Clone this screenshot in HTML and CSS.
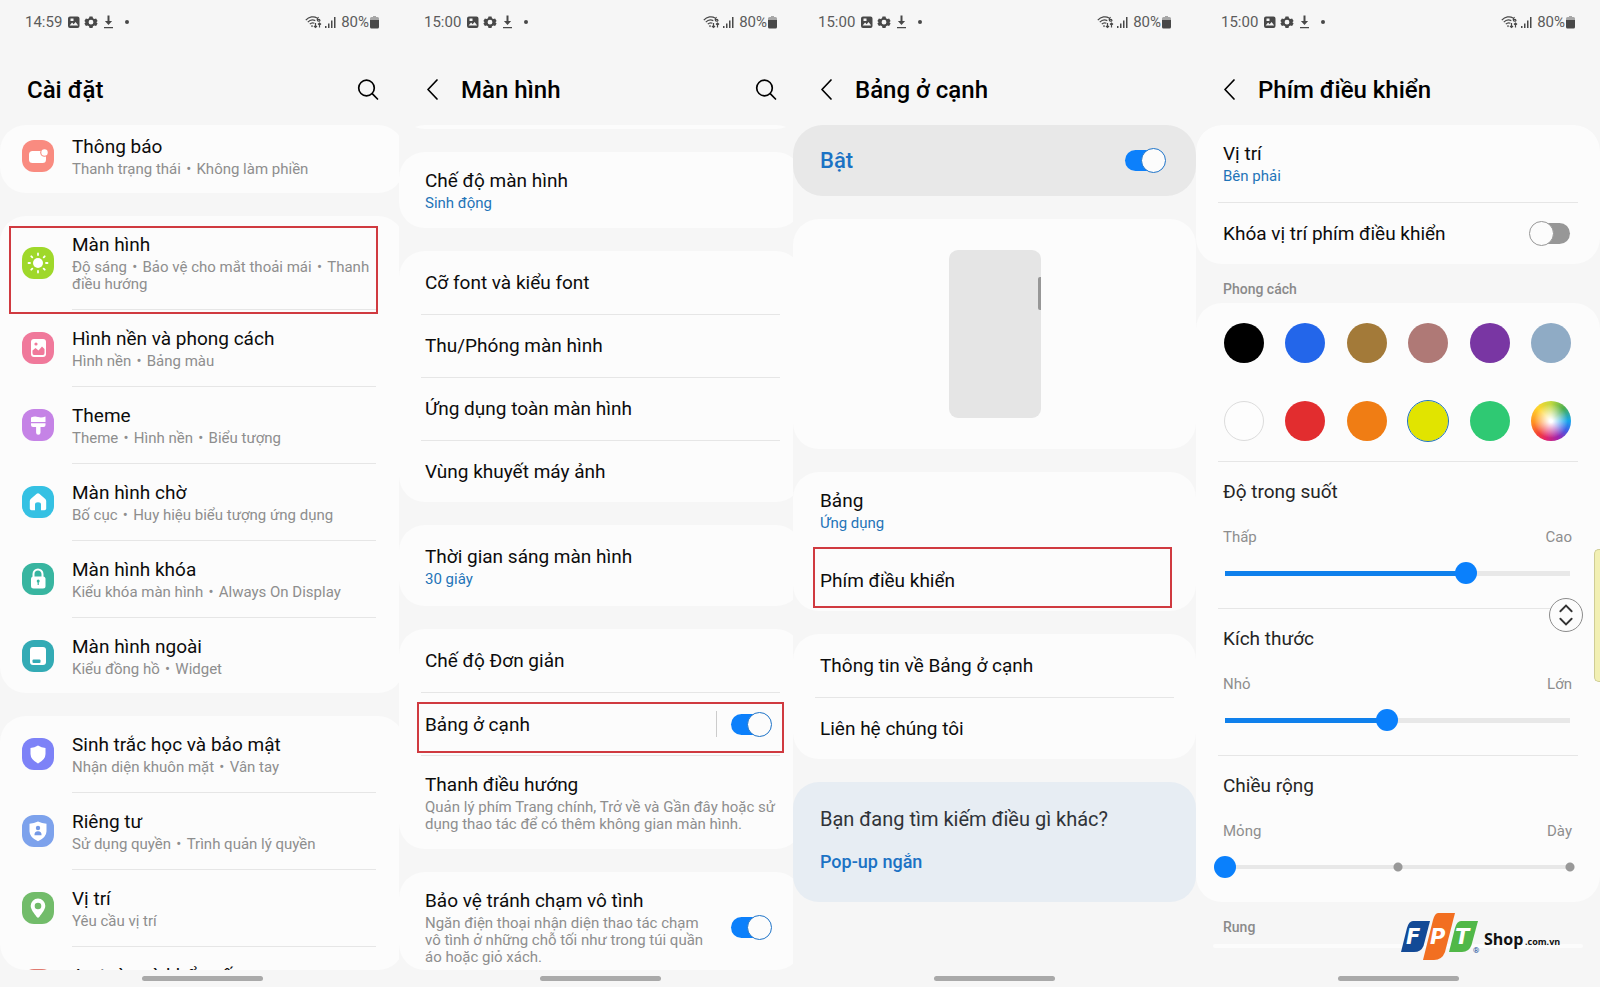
FILE: index.html
```html
<!DOCTYPE html>
<html lang="vi">
<head>
    <meta charset="UTF-8">
    <meta name="viewport" content="width=device-width, initial-scale=1.0">
    <title>Cài đặt Bảng ở cạnh</title>
    <link rel="stylesheet" href="styles.css">
</head>
<body>
    <!-- Shared icons -->
    <svg class="sprite" aria-hidden="true">
        <symbol id="i-left" viewBox="0 0 50 16">
            <path fill-rule="evenodd" d="M2 2.500h7.500a2 2 0 0 1 2 2v7.500a2 2 0 0 1-2 2H2a2 2 0 0 1-2-2V4.500a2 2 0 0 1 2-2zm-.4 9h8.600L7.600 8l-2 2.200-1.500-1.700zM2.500 4.500V7h3V4.500z"/>
            <path fill-rule="evenodd" d="M21.500 2.500h3l.5 1.700 1.300.8 1.800-.5 1.500 2.400L28.400 8.200l1.200 1.300-1.500 2.400-1.800-.5-1.300.8-.5 1.700h-3l-.5-1.700-1.300-.8-1.800.5-1.500-2.400 1.200-1.300-1.200-1.300 1.500-2.400 1.800.5 1.300-.8zM23 5.800a2.400 2.400 0 1 0 0 4.800 2.400 2.400 0 0 0 0-4.800z"/>
            <path d="M39.500 1.500h2v5.500h2.600L40.500 11 36.900 7h2.600zM36 13h9v1.300h-9z"/>
        </symbol>
        <symbol id="i-right" viewBox="0 0 32 16">
            <g fill="none" stroke="currentColor" stroke-width="1.200">
                <path d="M.8 6.200C4 2.500 9 2 12 4M2.800 8.200c2-2.300 5-2.800 7.500-1.600M4.800 10.200c1.300-1.400 3-1.700 4.600-1"/>
                <path d="M13.700 3.200c-2 .6-2 4 0 4s1.600-2.400-1.200-1.600"/>
                <path d="M10.500 9v4.500M9 12l1.500 1.500L12 12M14.500 13.500V9M13 10.500L14.500 9l1.500 1.500"/>
            </g>
            <path d="M6 12l1-1 1 1-1 1.200zM20 12h1.500v2H20zM23 9.500h1.500V14H23zM26 6.500h1.500V14H26zM29 3h1.500v11H29z"/>
        </symbol>
        <symbol id="i-battery" viewBox="0 0 9 13">
            <path opacity=".45" d="M3 0h3v1h1.500Q9 1 9 2.500V5H0V2.500Q0 1 1.500 1H3z"/>
            <path d="M0 4h9v7a1.500 1.500 0 0 1-1.500 1.500h-6A1.500 1.500 0 0 1 0 11z"/>
        </symbol>
        <symbol id="i-search" viewBox="0 0 22 22">
            <g fill="none" stroke="currentColor" stroke-width="1.700" stroke-linecap="round"><circle cx="9.500" cy="9" r="7.800"/><path d="M15.200 14.700L20.500 20"/></g>
        </symbol>
        <symbol id="i-back" viewBox="0 0 12 22">
            <path fill="none" stroke="currentColor" stroke-width="1.700" stroke-linecap="round" stroke-linejoin="round" d="M11 1L2 10.500 11 20"/>
        </symbol>
    </svg>

    <main class="screens">
        <!-- Settings list -->
        <section class="screen screen-settings">
            <div class="status">
                <span>14:59</span><svg class="status-left"><use href="#i-left"/></svg><i class="status-dot"></i>
                <svg class="status-right"><use href="#i-right"/></svg><span class="percent">80%</span><svg class="battery"><use href="#i-battery"/></svg>
            </div>
            <header class="header">
                <h1>Cài đặt</h1>
                <button class="icon-btn search" aria-label="Tìm kiếm"><svg><use href="#i-search"/></svg></button>
            </header>
            <div class="scroll">
                <div class="card cut-first">
                    <a class="row" href="#">
                        <span class="app-icon coral"><svg viewBox="0 0 32 32"><rect x="7" y="11" width="17" height="12" rx="3.500" fill="#fff"/><circle cx="22.500" cy="12.500" r="4.300" fill="#f98b80"/><circle cx="22.500" cy="12.500" r="3.200" fill="#fff"/></svg></span>
                        <span class="text"><span class="title">Thông báo</span><span class="sub">Thanh trạng thái&hairsp; • &hairsp;Không làm phiền</span></span>
                    </a>
                </div>
                <div class="card">
                    <a class="row" href="#">
                        <span class="app-icon lime"><svg viewBox="0 0 32 32"><circle cx="16" cy="16" r="5" fill="#fff"/><path stroke="#fff" stroke-width="1.800" stroke-linecap="round" d="M16 6.500v1.500M16 24v1.500M6.500 16H8M24 16h1.500M9.300 9.300l1 1M21.700 21.700l1 1M9.300 22.700l1-1M21.700 10.300l1-1"/></svg></span>
                        <span class="text"><span class="title">Màn hình</span><span class="sub">Độ sáng&hairsp; • &hairsp;Bảo vệ cho mắt thoải mái&hairsp; • &hairsp;Thanh điều hướng</span></span>
                        <span class="mark mark-display"></span>
                    </a>
                    <a class="row" href="#">
                        <span class="app-icon pink"><svg viewBox="0 0 32 32"><rect x="9" y="7" width="15" height="18" rx="3" fill="#fff"/><circle cx="14" cy="12" r="1.600" fill="#f0799b"/><path fill="#f0799b" d="M10.500 21v-2.500l3-2.500 3 2.500 3.500-4 2.500 2.500v4q0 2-1.500 2H12q-1.500 0-1.500-2z"/></svg></span>
                        <span class="text"><span class="title">Hình nền và phong cách</span><span class="sub">Hình nền&hairsp; • &hairsp;Bảng màu</span></span>
                    </a>
                    <a class="row" href="#">
                        <span class="app-icon violet"><svg viewBox="0 0 32 32"><path fill="#fff" d="M9 8.500q3.500-1.500 7-.5t7.500-.5V13H9zM9 14.200h14.500V16q0 2-2 2H18.500v5.500a2.200 2.200 0 0 1-4.400 0V18H11q-2 0-2-2z"/></svg></span>
                        <span class="text"><span class="title">Theme</span><span class="sub">Theme&hairsp; • &hairsp;Hình nền&hairsp; • &hairsp;Biểu tượng</span></span>
                    </a>
                    <a class="row" href="#">
                        <span class="app-icon sky"><svg viewBox="0 0 32 32"><path fill="#fff" d="M14.700 7.800q1.300-1.100 2.600 0l6 5.200q.9.800.9 2v7.500q0 1.800-1.800 1.800H19V18.500q0-2.200-3-2.200t-3 2.200v5.800H9.600q-1.800 0-1.800-1.800V15q0-1.200.9-2z"/></svg></span>
                        <span class="text"><span class="title">Màn hình chờ</span><span class="sub">Bố cục&hairsp; • &hairsp;Huy hiệu biểu tượng ứng dụng</span></span>
                    </a>
                    <a class="row" href="#">
                        <span class="app-icon teal"><svg viewBox="0 0 32 32"><path fill="none" stroke="#fff" stroke-width="2" d="M11.500 15v-4a4.500 4.500 0 0 1 9 0v4"/><rect x="9" y="13.500" width="14.500" height="12" rx="2.500" fill="#fff"/><circle cx="16.200" cy="18" r="1.500" fill="#38b5a0"/><path stroke="#38b5a0" stroke-width="1.200" d="M16.200 18v4"/></svg></span>
                        <span class="text"><span class="title">Màn hình khóa</span><span class="sub">Kiểu khóa màn hình&hairsp; • &hairsp;Always On Display</span></span>
                    </a>
                    <a class="row" href="#">
                        <span class="app-icon aqua"><svg viewBox="0 0 32 32"><rect x="8" y="7" width="16" height="18" rx="3" fill="#fff"/><rect x="10.500" y="19.500" width="8" height="3.500" rx="1" fill="#33abb5"/></svg></span>
                        <span class="text"><span class="title">Màn hình ngoài</span><span class="sub">Kiểu đồng hồ&hairsp; • &hairsp;Widget</span></span>
                    </a>
                </div>
                <div class="card">
                    <a class="row" href="#">
                        <span class="app-icon indigo"><svg viewBox="0 0 32 32"><path fill="#fff" d="M16 7.500q3.500 2 7.500 2.500v6q0 5.500-7.500 9.500-7.500-4-7.500-9.500v-6q4-.5 7.500-2.500z"/></svg></span>
                        <span class="text"><span class="title">Sinh trắc học và bảo mật</span><span class="sub">Nhận diện khuôn mặt&hairsp; • &hairsp;Vân tay</span></span>
                    </a>
                    <a class="row" href="#">
                        <span class="app-icon blue"><svg viewBox="0 0 32 32"><path fill="#fff" d="M16 6.500q4 2 8.500 2.300v7.500q0 6-8.500 10-8.500-4-8.500-10V8.800Q12 8.500 16 6.500z"/><circle cx="16" cy="13" r="2.200" fill="#7499e6"/><path fill="#7499e6" d="M12.500 20.300q-.3-4 3.500-4t3.500 4z"/></svg></span>
                        <span class="text"><span class="title">Riêng tư</span><span class="sub">Sử dụng quyền&hairsp; • &hairsp;Trình quản lý quyền</span></span>
                    </a>
                    <a class="row" href="#">
                        <span class="app-icon green"><svg viewBox="0 0 32 32"><path fill="#fff" fill-rule="evenodd" d="M16 6.500a7.300 7.300 0 0 1 7.300 7.300c0 3.700-3.500 7.700-6 11.200q-1.300 1.500-2.600 0c-2.500-3.500-6-7.500-6-11.200A7.300 7.300 0 0 1 16 6.500zm0 4.200a3.300 3.300 0 1 0 0 6.600 3.300 3.300 0 0 0 0-6.600z"/></svg></span>
                        <span class="text"><span class="title">Vị trí</span><span class="sub">Yêu cầu vị trí</span></span>
                    </a>
                    <a class="row" href="#">
                        <span class="app-icon red"></span>
                        <span class="text"><span class="title">An toàn và khẩn cấp</span></span>
                    </a>
                </div>
            </div>
            <div class="home"></div>
        </section>

        <!-- Display -->
        <section class="screen screen-display">
            <div class="status">
                <span>15:00</span><svg class="status-left"><use href="#i-left"/></svg><i class="status-dot"></i>
                <svg class="status-right"><use href="#i-right"/></svg><span class="percent">80%</span><svg class="battery"><use href="#i-battery"/></svg>
            </div>
            <header class="header">
                <button class="icon-btn back" aria-label="Quay lại"><svg><use href="#i-back"/></svg></button>
                <h1>Màn hình</h1>
                <button class="icon-btn search" aria-label="Tìm kiếm"><svg><use href="#i-search"/></svg></button>
            </header>
            <div class="scroll">
                <div class="card sliver"></div>
                <div class="card">
                    <a class="row" href="#"><span class="text"><span class="title">Chế độ màn hình</span><span class="sub value">Sinh động</span></span></a>
                </div>
                <div class="card">
                    <a class="row single" href="#"><span class="title">Cỡ font và kiểu font</span></a>
                    <a class="row single" href="#"><span class="title">Thu/Phóng màn hình</span></a>
                    <a class="row single" href="#"><span class="title">Ứng dụng toàn màn hình</span></a>
                    <a class="row single" href="#"><span class="title">Vùng khuyết máy ảnh</span></a>
                </div>
                <div class="card">
                    <a class="row tall" href="#"><span class="text"><span class="title">Thời gian sáng màn hình</span><span class="sub value">30 giây</span></span></a>
                </div>
                <div class="card">
                    <a class="row single" href="#"><span class="title">Chế độ Đơn giản</span></a>
                    <div class="row single">
                        <label class="title" for="edge">Bảng ở cạnh</label>
                        <i class="divider"></i>
                        <input class="toggle" type="checkbox" id="edge" checked>
                        <span class="mark mark-edge"></span>
                    </div>
                    <a class="row" href="#"><span class="text"><span class="title">Thanh điều hướng</span><span class="sub">Quản lý phím Trang chính, Trở về và Gần đây hoặc sử dụng thao tác để có thêm không gian màn hình.</span></span></a>
                </div>
                <div class="card">
                    <div class="row">
                        <label class="text" for="touch"><span class="title">Bảo vệ tránh chạm vô tình</span><span class="sub">Ngăn điện thoại nhận diện thao tác chạm vô tình ở những chỗ tối như trong túi quần áo hoặc giỏ xách.</span></label>
                        <input class="toggle" type="checkbox" id="touch" checked>
                    </div>
                </div>
            </div>
            <div class="home"></div>
        </section>

        <!-- Edge panels -->
        <section class="screen screen-edge">
            <div class="status">
                <span>15:00</span><svg class="status-left"><use href="#i-left"/></svg><i class="status-dot"></i>
                <svg class="status-right"><use href="#i-right"/></svg><span class="percent">80%</span><svg class="battery"><use href="#i-battery"/></svg>
            </div>
            <header class="header">
                <button class="icon-btn back" aria-label="Quay lại"><svg><use href="#i-back"/></svg></button>
                <h1>Bảng ở cạnh</h1>
            </header>
            <div class="scroll">
                <div class="card master">
                    <label for="master">Bật</label>
                    <input class="toggle" type="checkbox" id="master" checked>
                </div>
                <div class="card preview"><div class="phone"><i></i></div></div>
                <div class="card">
                    <a class="row" href="#"><span class="text"><span class="title">Bảng</span><span class="sub value">Ứng dụng</span></span></a>
                    <a class="row single" href="#"><span class="title">Phím điều khiển</span><span class="mark mark-handle"></span></a>
                </div>
                <div class="card">
                    <a class="row single" href="#"><span class="title">Thông tin về Bảng ở cạnh</span></a>
                    <a class="row single" href="#"><span class="title">Liên hệ chúng tôi</span></a>
                </div>
                <div class="card tip">
                    <p>Bạn đang tìm kiếm điều gì khác?</p>
                    <a href="#">Pop-up ngắn</a>
                </div>
            </div>
            <div class="home"></div>
        </section>

        <!-- Handle -->
        <section class="screen screen-handle">
            <div class="status">
                <span>15:00</span><svg class="status-left"><use href="#i-left"/></svg><i class="status-dot"></i>
                <svg class="status-right"><use href="#i-right"/></svg><span class="percent">80%</span><svg class="battery"><use href="#i-battery"/></svg>
            </div>
            <header class="header">
                <button class="icon-btn back" aria-label="Quay lại"><svg><use href="#i-back"/></svg></button>
                <h1>Phím điều khiển</h1>
            </header>
            <div class="scroll">
                <div class="card">
                    <a class="row" href="#"><span class="text"><span class="title">Vị trí</span><span class="sub value">Bên phải</span></span></a>
                    <div class="row single">
                        <label class="title" for="lock">Khóa vị trí phím điều khiển</label>
                        <input class="toggle" type="checkbox" id="lock">
                    </div>
                </div>
                <h2 class="section-label">Phong cách</h2>
                <div class="card">
                    <div class="swatches">
                        <input type="radio" name="color" class="c-black" aria-label="Đen">
                        <input type="radio" name="color" class="c-blue" aria-label="Xanh dương">
                        <input type="radio" name="color" class="c-brown" aria-label="Nâu">
                        <input type="radio" name="color" class="c-rose" aria-label="Hồng">
                        <input type="radio" name="color" class="c-purple" aria-label="Tím">
                        <input type="radio" name="color" class="c-steel" aria-label="Xanh xám">
                        <input type="radio" name="color" class="c-white" aria-label="Trắng">
                        <input type="radio" name="color" class="c-red" aria-label="Đỏ">
                        <input type="radio" name="color" class="c-orange" aria-label="Cam">
                        <input type="radio" name="color" class="c-yellow" aria-label="Vàng" checked>
                        <input type="radio" name="color" class="c-green" aria-label="Xanh lá">
                        <input type="radio" name="color" class="c-custom" aria-label="Tùy chỉnh">
                    </div>
                    <div class="slider">
                        <label for="opacity">Độ trong suốt</label>
                        <div class="ends"><span>Thấp</span><span>Cao</span></div>
                        <input type="range" id="opacity" value="70" style="--value: 70%">
                    </div>
                    <div class="slider">
                        <label for="size">Kích thước</label>
                        <div class="ends"><span>Nhỏ</span><span>Lớn</span></div>
                        <input type="range" id="size" value="47" style="--value: 47%">
                    </div>
                    <div class="slider">
                        <label for="width">Chiều rộng</label>
                        <div class="ends"><span>Mỏng</span><span>Dày</span></div>
                        <input type="range" id="width" class="steps" min="0" max="2" value="0">
                    </div>
                </div>
                <h2 class="section-label">Rung</h2>
                <div class="card sliver-top"></div>
            </div>
            <div class="home"></div>

            <button class="move-btn" aria-label="Di chuyển"><svg viewBox="0 0 34 34"><path d="M11 13l6-6 6 6M11 21l6 6 6-6"/></svg></button>
            <div class="edge-handle"></div>
            <svg class="logo" viewBox="0 0 160 48">
                <path fill="#134a96" d="M12 8H29L22.500 33Q20 39 13 39H0L6 15Q8 8 12 8z"/>
                <path fill="#f26f21" d="M37 0H54L44 39Q41 47 33 47H22L32 7Q34 0 37 0z"/>
                <path fill="#51b848" d="M60 8H77L70.500 32Q68 39 61 39H48L54 15Q56 8 60 8z"/>
                <g class="logo-letters"><text x="5" y="31">F</text><text x="29" y="31">P</text><text x="54" y="31">T</text></g>
                <text class="logo-reg" x="72" y="40">®</text>
                <text class="logo-shop" x="83" y="32">Shop</text>
                <text class="logo-domain" x="124" y="32">.com.vn</text>
            </svg>
        </section>
    </main>
</body>
</html>
```

FILE: styles.css
```css
* {
    box-sizing: border-box;
}
body {
    margin: 0;
    font-family: Roboto, "Noto Sans", sans-serif;
    color: #0c0c0c;
    background: #f6f6f6;
}
a {
    color: inherit;
    text-decoration: none;
}
input, button {
    margin: 0;
    font: inherit;
}
.sprite {
    display: none;
}

/* Screens: each one is drawn over the right edge of the one before */
.screens {
    display: grid;
    grid-template-columns: 399fr 394fr 403fr 404fr;
    height: 100vh;
    overflow: hidden;
}
.screen {
    position: relative;
    display: flex;
    flex-direction: column;
    min-width: 0;
    min-height: 0;
    background: #f6f6f6;
}
.screen-settings {
    margin-right: -5px;
}
.screen-display {
    margin-right: -9px;
}

/* Status bar */
.status {
    display: flex;
    align-items: center;
    height: 44px;
    padding: 0 25px;
    font-size: 15px;
    color: #5c5c5c;
}
.status svg {
    fill: #484848;
    color: #484848;
}
.status-left {
    width: 50px;
    height: 16px;
    margin-left: 6px;
}
.status-dot {
    width: 4px;
    height: 4px;
    margin-left: 7px;
    border-radius: 50%;
    background: #484848;
}
.status-right {
    width: 32px;
    height: 16px;
    margin-left: auto;
}
.percent {
    margin: 0 1px 0 4px;
}
.battery {
    width: 9px;
    height: 13px;
}

/* Header */
.header {
    display: flex;
    align-items: center;
    height: 81px;
    padding: 10px 25px 0 27px;
    color: #000;
}
.header h1 {
    margin: 0;
    font-size: 24px;
    font-weight: 500;
}
.icon-btn {
    display: flex;
    padding: 0;
    border: none;
    background: none;
    color: #000;
    cursor: pointer;
}
.search {
    margin-left: auto;
}
.search svg {
    width: 22px;
    height: 22px;
}
.back {
    margin-right: 23px;
}
.back svg {
    width: 12px;
    height: 22px;
}

/* Cards and rows */
.scroll {
    flex: 1;
    display: flex;
    flex-direction: column;
    gap: 23px;
    min-height: 0;
    overflow: hidden;
    border-radius: 26px;
}
.card {
    flex-shrink: 0;
    border-radius: 26px;
    background: #fcfcfc;
}
.cut-first {
    margin-top: -7px;
}
.sliver {
    height: 60px;
    margin-top: -56px;
}
.row {
    position: relative;
    display: flex;
    align-items: center;
    padding: 16px 22px 16px 27px;
}
.screen-display .row {
    padding-left: 26px;
}
.row + .row::before {
    content: "";
    position: absolute;
    top: 0;
    left: 22px;
    right: 22px;
    height: 1px;
    background: #e6e6e6;
}
.row + .row {
    padding-top: 17px;
}
.text {
    flex: 1;
    min-height: 44px;
}
.title {
    display: block;
    font-size: 19px;
    line-height: 25px;
}
.sub {
    display: block;
    margin-top: 2px;
    font-size: 15px;
    line-height: 17px;
    color: #8e8e8e;
}
.sub.value {
    color: #1f74b8;
}
.row.single,
.row.tall {
    padding-top: 19px;
    padding-bottom: 18px;
}
.row + .single {
    border-top: 1px solid transparent;
}
.row label.title {
    flex: 1;
}
.row .toggle {
    margin: 0 8px 0 24px;
}
.divider {
    width: 1px;
    height: 26px;
    background: #ccc;
}
.row .divider + .toggle {
    margin-left: 14px;
}

/* Settings list */
.screen-settings .row {
    padding-left: 22px;
}
.screen-settings .row:last-child {
    padding-bottom: 15px;
}
.screen-settings .row + .row::before {
    left: 72px;
    right: 28px;
}
.app-icon {
    width: 32px;
    height: 32px;
    margin-right: 18px;
    border-radius: 12px;
}
.app-icon svg {
    display: block;
}
.coral { background: #f98b80; }
.lime { background: #9fd82a; }
.pink { background: #f0799b; }
.violet { background: #c583e6; }
.sky { background: #35c1e3; }
.teal { background: #38b5a0; }
.aqua { background: #33abb5; }
.indigo { background: #7d82f7; }
.blue { background: #7da2ec; }
.green { background: #72bc6a; }
.red { background: #e07a70; }

/* Red frames round the row to tap */
.mark {
    position: absolute;
    border: 2px solid #d03a40;
    pointer-events: none;
}
.mark-display {
    inset: 10px 26px -5px 9px;
}
.mark-edge {
    inset: 10px 18px 2px;
}
.mark-handle {
    inset: -2px 24px 3px 20px;
}

/* Toggle */
.toggle {
    appearance: none;
    display: grid;
    align-items: center;
    flex-shrink: 0;
    width: 41px;
    height: 25px;
}
.toggle::before,
.toggle::after {
    content: "";
    grid-area: 1 / 1;
}
.toggle::before {
    height: 21px;
    margin-left: 2px;
    border-radius: 11px;
    background: #979797;
}
.toggle::after {
    box-sizing: border-box;
    width: 25px;
    height: 25px;
    border: 1px solid #979797;
    border-radius: 50%;
    background: #fcfcfc;
}
.toggle:checked::before {
    margin: 0 2px 0 0;
    background: #0c80fb;
}
.toggle:checked::after {
    justify-self: end;
    border-color: #1f74c8;
}

/* Edge panels */
.master {
    display: flex;
    align-items: center;
    justify-content: space-between;
    height: 71px;
    padding: 0 30px 0 27px;
    border-radius: 30px;
    background: #e8e8e8;
    font-size: 22px;
    font-weight: 500;
    color: #1b72c4;
}
.preview {
    display: flex;
    justify-content: center;
    padding: 31px 0;
}
.phone {
    width: 92px;
    height: 168px;
    padding-top: 27px;
    border-radius: 9px;
    background: #e5e5e5;
}
.phone i {
    display: block;
    width: 3px;
    height: 33px;
    margin-left: auto;
    border-radius: 2px 0 0 2px;
    background: #979797;
}
.screen-edge .row + .single:has(.mark)::before {
    display: none;
}
.tip {
    padding: 24px 27px 27px;
    background: #e7edf3;
}
.tip p {
    margin: 0 0 15px;
    font-size: 20px;
    line-height: 27px;
    color: #303338;
}
.tip a {
    display: block;
    font-size: 18px;
    font-weight: 500;
    line-height: 27px;
    color: #1b72c4;
}

/* Handle */
.section-label {
    flex-shrink: 0;
    margin: -23px 0;
    padding: 11px 27px 0;
    font-size: 14px;
    font-weight: 500;
    line-height: 28px;
    color: #8a8a8a;
}
.sliver-top {
    height: 4px;
    margin: 3px 17px 0;
}
.swatches {
    display: grid;
    grid-template-columns: repeat(6, 40px);
    justify-content: space-between;
    row-gap: 38px;
    padding: 20px 29px 20px 28px;
}
.swatches input {
    appearance: none;
    height: 40px;
    border-radius: 50%;
}
.swatches input:checked {
    outline: 1px solid #1f74b8;
    outline-offset: 0;
}
.c-black { background: #000; }
.c-blue { background: #2366ea; }
.c-brown { background: #a37a39; }
.c-rose { background: #af7976; }
.c-purple { background: #7936a3; }
.c-steel { background: #8fabc5; }
.c-white { background: #fdfdfd; border: 1px solid #dcdcdc; }
.c-red { background: #e22d2f; }
.c-orange { background: #f07d14; }
.c-yellow { background: #e1e400; }
.c-green { background: #2fc973; }
.c-custom {
    background:
        radial-gradient(circle, #fff 5%, rgba(255, 255, 255, 0) 60%),
        conic-gradient(#c0d840, #4caf50 45deg, #14a5ee 90deg, #3f62e8 120deg, #9c27b0 155deg, #e0246e 195deg, #f44336 225deg, #ff9020 265deg, #ffd52e 315deg, #c0d840);
}
.slider {
    position: relative;
    padding: 18px 19px 24px 18px;
}
.slider::before {
    content: "";
    position: absolute;
    top: 0;
    left: 22px;
    right: 22px;
    height: 1px;
    background: #e6e6e6;
}
.slider label {
    display: block;
    padding-left: 9px;
    font-size: 19px;
    line-height: 25px;
    color: #252525;
}
.ends {
    display: flex;
    justify-content: space-between;
    padding: 23px 9px 15px;
    font-size: 15px;
    line-height: 20px;
    color: #8e8e8e;
}
.slider input {
    appearance: none;
    display: block;
    width: 100%;
    height: 22px;
    padding: 0 11px;
    background: linear-gradient(90deg, #0f80ec var(--value, 0%), #e8e8e8 var(--value, 0%)) center / 100% 5px no-repeat content-box;
}
.slider input::-webkit-slider-thumb {
    appearance: none;
    width: 22px;
    height: 22px;
    border-radius: 50%;
    background: #0a80fc;
}
.slider input::-webkit-slider-runnable-track {
    margin: 0 -11px;
}
.slider .steps {
    background:
        radial-gradient(circle, #999 4px, transparent 5px) center / 10px 10px no-repeat,
        radial-gradient(circle, #999 4px, transparent 5px) right 6px center / 10px 10px no-repeat,
        linear-gradient(#e8e8e8, #e8e8e8) center / calc(100% - 22px) 4px no-repeat;
}
.move-btn {
    position: absolute;
    top: 598px;
    right: 17px;
    display: flex;
    padding: 0;
    border: 1px solid #8c8c8c;
    border-radius: 50%;
    background: #fcfcfc;
}
.move-btn svg {
    width: 32px;
    height: 32px;
    fill: none;
    stroke: #333;
    stroke-width: 2;
    stroke-linecap: round;
}
.edge-handle {
    position: absolute;
    top: 549px;
    right: 0;
    width: 6px;
    height: 133px;
    border: 1px solid #cfcd95;
    border-right: none;
    border-radius: 5px 0 0 5px;
    background: #f2f0b4;
}
.logo {
    position: absolute;
    right: 39px;
    bottom: 26px;
    width: 160px;
    height: 48px;
}
.logo-letters {
    font: italic bold 21px "DejaVu Sans", sans-serif;
    fill: #fff;
}
.logo-reg {
    font-size: 8px;
    fill: #134a96;
}
.logo-shop {
    font: bold 16px "Open Sans", sans-serif;
    fill: #111;
}
.logo-domain {
    font: bold 9px "Open Sans", sans-serif;
    fill: #111;
}

/* Home indicator */
.home {
    flex-shrink: 0;
    width: 121px;
    height: 5px;
    margin: 6px auto;
    border-radius: 3px;
    background: #a9a9a9;
}
```
